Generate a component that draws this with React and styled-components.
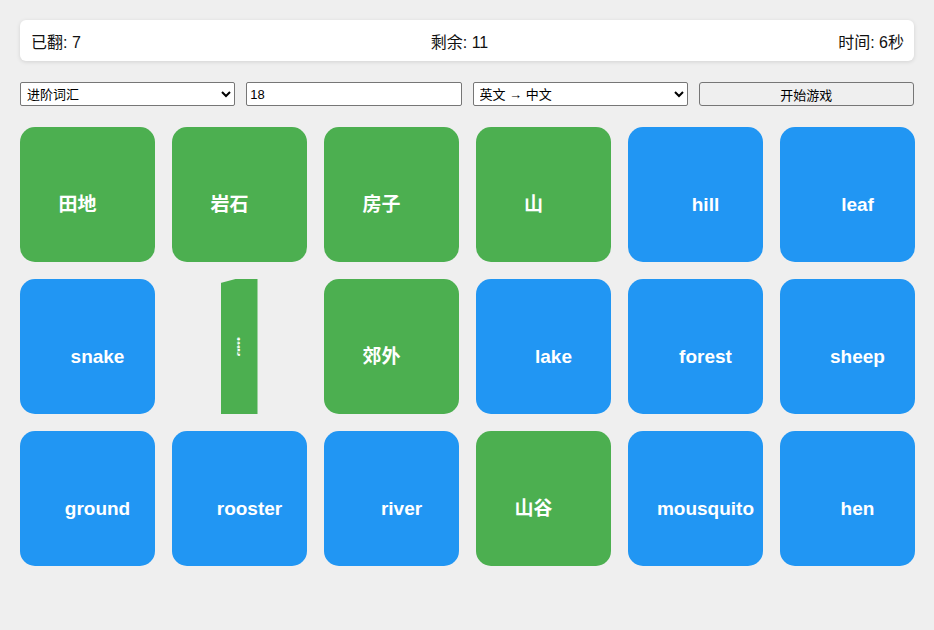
import React from 'react'
import styled, { createGlobalStyle } from 'styled-components'

const GlobalStyle = createGlobalStyle`
  body {
    margin: 0;
    background: #efefef;
    font-family: "Liberation Sans", "Noto Sans CJK SC", sans-serif;
  }
`

const Page = styled.div`
  padding: 20px;
  width: 894px;
`

const StatusBar = styled.div`
  display: flex;
  justify-content: space-between;
  align-items: center;
  height: 41px;
  padding: 0 10px 0 11px;
  background: #fff;
  border-radius: 6px;
  box-shadow: 0 1px 4px rgba(0, 0, 0, 0.12);
  font-size: 16px;
  color: #111;
  box-sizing: border-box;
`

const Controls = styled.div`
  display: grid;
  grid-template-columns: repeat(4, 1fr);
  gap: 11px;
  margin: 21px 0 21px;
`

const fieldBase = `
  width: 100%;
  min-width: 0;
  height: 24px;
  box-sizing: border-box;
  border: 1px solid #767676;
  border-radius: 2px;
  font-family: "Liberation Sans", "Noto Sans CJK SC", sans-serif;
  font-size: 13px;
  color: #000;
`

const Select = styled.select`
  ${fieldBase}
  background: #fff;
  padding: 0 2px;
`

const Input = styled.input`
  ${fieldBase}
  background: #fff;
  padding: 0 3px;
`

const Button = styled.button`
  ${fieldBase}
  background: #efefef;
  border-radius: 3px;
`

const Grid = styled.div`
  display: grid;
  grid-template-columns: repeat(6, 135px);
  grid-auto-rows: 135px;
  column-gap: 17px;
  row-gap: 17px;
`

const Card = styled.div`
  border-radius: 15px;
  background: ${p => (p.$side === 'zh' ? '#4caf50' : '#2196f3')};
  color: #fff;
  font-weight: bold;
  font-size: 19px;
  display: flex;
  align-items: center;
  justify-content: center;
`

const Word = styled.span`
  transform: ${p => (p.$side === 'zh' ? 'translate(-10px, 8px)' : 'translate(10px, 10px)')};
  white-space: nowrap;
`

const FlipCell = styled.div`
  display: flex;
  justify-content: center;
  padding-right: 1px;
`

const FlipFace = styled.div`
  width: 37px;
  height: 135px;
  background: #4caf50;
  clip-path: polygon(0 4px, 15px 0, 100% 0, 100% 100%, 0 100%);
  display: flex;
  align-items: center;
  justify-content: center;
  color: #fff;
  font-weight: bold;
  font-size: 19px;
`

const Squashed = styled.span`
  display: inline-block;
  transform: translateY(-1px) scaleX(0.16);
`

const cards = [
  ['zh', '田地'], ['zh', '岩石'], ['zh', '房子'], ['zh', '山'], ['en', 'hill'], ['en', 'leaf'],
  ['en', 'snake'], ['flip', '郊外'], ['zh', '郊外'], ['en', 'lake'], ['en', 'forest'], ['en', 'sheep'],
  ['en', 'ground'], ['en', 'rooster'], ['en', 'river'], ['zh', '山谷'], ['en', 'mousquito'], ['en', 'hen']
]

const App = () => (
  <Page>
    <GlobalStyle />
    <StatusBar>
      <span>已翻: 7</span>
      <span>剩余: 11</span>
      <span>时间: 6秒</span>
    </StatusBar>
    <Controls>
      <Select defaultValue='adv'>
        <option value='adv'>进阶词汇</option>
      </Select>
      <Input defaultValue='18' />
      <Select defaultValue='en'>
        <option value='en'>英文 → 中文</option>
      </Select>
      <Button>开始游戏</Button>
    </Controls>
    <Grid>
      {cards.map(([side, text], i) =>
        side === 'flip' ? (
          <FlipCell key={i}>
            <FlipFace>
              <Squashed>莲</Squashed>
            </FlipFace>
          </FlipCell>
        ) : (
          <Card key={i} $side={side}>
            <Word $side={side}>{text}</Word>
          </Card>
        )
      )}
    </Grid>
  </Page>
)

export default App
